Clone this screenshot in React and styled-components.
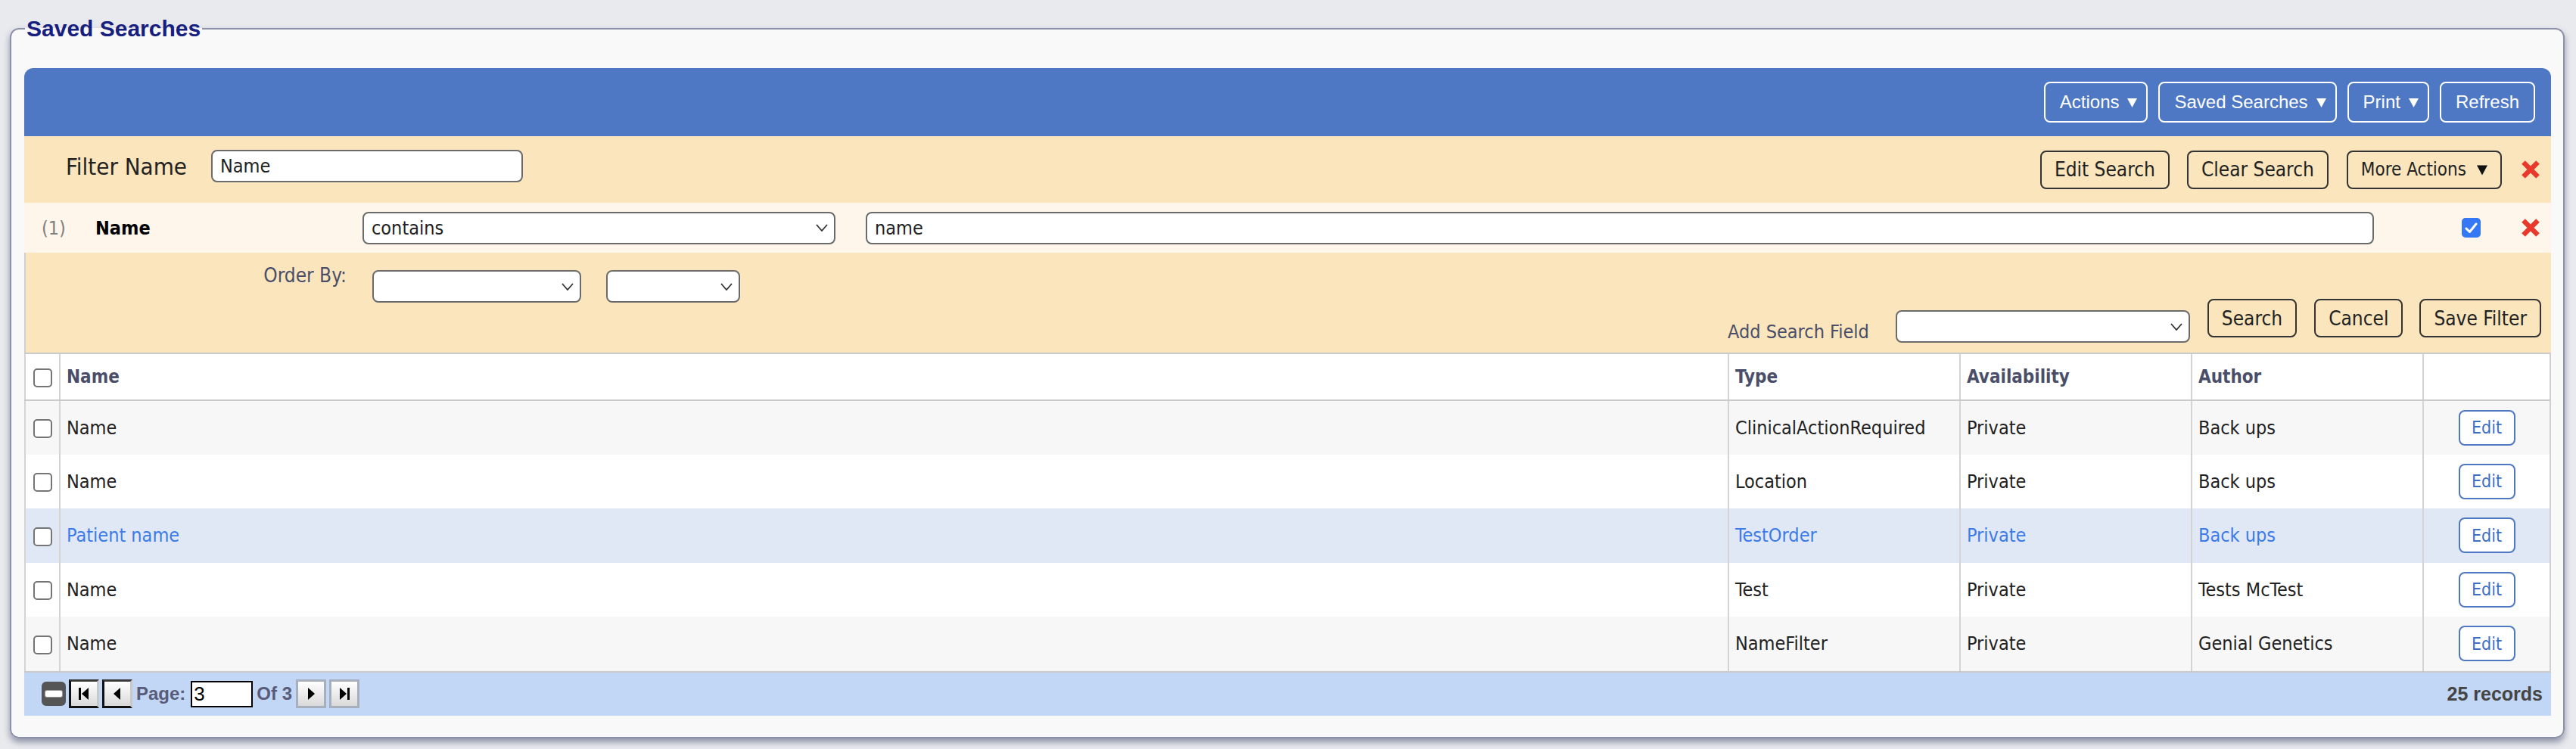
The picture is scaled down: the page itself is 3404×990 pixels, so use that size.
import React from "react";
import styled, { createGlobalStyle, css } from "styled-components";

const GlobalStyle = createGlobalStyle`
  html, body {
    margin: 0;
    background: #e9eaee;
  }
  body {
    font-family: "DejaVu Sans Condensed", "Liberation Sans", Arial, sans-serif;
    color: #222;
  }
`;

const Page = styled.div`
  padding: 23px 15px 17px 13px;
`;

const Frame = styled.fieldset`
  margin: 0;
  min-width: 0;
  padding: 37px 16px 28px 17px;
  border: 2px solid #8d90a9;
  border-radius: 12px;
  background: #f9f9f9;
  box-shadow: 0 5px 8px rgba(70, 74, 110, 0.55);
`;

const Legend = styled.legend`
  margin-left: 1px;
  padding: 0 2px;
  font: bold 30px/30px "Liberation Sans", Arial, sans-serif;
  color: #17207f;
`;

const Panel = styled.div`
  display: flex;
  flex-direction: column;
`;

/* ---- blue toolbar ---- */
const Toolbar = styled.div`
  height: 90px;
  background: #4e78c4;
  border-radius: 12px 12px 0 0;
  display: flex;
  justify-content: flex-end;
  align-items: center;
  gap: 14px;
  padding-right: 21px;
`;

const ToolButton = styled.button`
  height: 54px;
  box-sizing: border-box;
  display: flex;
  align-items: center;
  gap: 11px;
  padding: 0 ${p => (p.$menu ? 12 : 19)}px 0 19px;
  border: 2px solid #fff;
  border-radius: 8px;
  background: transparent;
  color: #fff;
  font: 24px "Liberation Sans", Arial, sans-serif;
`;

/* ---- filter name row ---- */
const FilterNameRow = styled.div`
  height: 88px;
  box-sizing: border-box;
  background: #fae5bc;
  display: flex;
  align-items: center;
  padding: 0 14px 0 55px;
`;

const BigLabel = styled.span`
  font-size: 31px;
  color: #222;
  margin-bottom: 8px;
`;

const TextInput = styled.input`
  box-sizing: border-box;
  height: 43px;
  width: ${p => (p.$w ? `${p.$w}px` : "auto")};
  flex: ${p => (p.$grow ? 1 : "none")};
  margin-left: ${p => p.$ml || 0}px;
  margin-bottom: ${p => p.$mb || 0}px;
  padding: 0 10px;
  border: 2px solid #6b6b6b;
  border-radius: 8px;
  background: #fff;
  font-family: inherit;
  font-size: 25px;
  color: #222;
  outline: none;
`;

const ButtonGroup = styled.div`
  margin-left: auto;
  display: flex;
  align-items: center;
`;

const TanButton = styled.button`
  height: 51px;
  box-sizing: border-box;
  display: flex;
  align-items: center;
  gap: 14px;
  margin-left: ${p => p.$ml || 0}px;
  padding: 0 17px;
  border: 2px solid #333;
  border-radius: 8px;
  background: #fae5bc;
  color: #222;
  font-family: inherit;
  font-size: ${p => (p.$small ? 24 : 26)}px;
`;

const RemoveMark = styled.span`
  display: inline-flex;
  margin-left: ${p => p.$ml || 0}px;
`;

/* ---- criteria row ---- */
const CriteriaRow = styled.div`
  height: 66px;
  box-sizing: border-box;
  background: #fef6ea;
  display: flex;
  align-items: center;
  padding: 0 14px 0 23px;
`;

const Index = styled.span`
  width: 71px;
  font-size: 25px;
  color: #808080;
`;

const FieldName = styled.span`
  width: 353px;
  font-size: 25px;
  font-weight: bold;
  color: #000;
`;

const SelectBox = styled.div`
  box-sizing: border-box;
  width: ${p => p.$w}px;
  height: 43px;
  flex: none;
  margin-left: ${p => p.$ml || 0}px;
  margin-top: ${p => p.$mt || 0}px;
  display: flex;
  align-items: center;
  padding: 0 8px 0 10px;
  border: 2px solid #6b6b6b;
  border-radius: 8px;
  background: #fff;
  font-size: 25px;
  color: #222;
  svg {
    margin-left: auto;
  }
`;

const Check = styled.span`
  box-sizing: border-box;
  width: 25px;
  height: ${p => (p.$checked ? 26 : 25)}px;
  flex: none;
  margin-left: ${p => p.$ml || 0}px;
  display: inline-flex;
  align-items: center;
  justify-content: center;
  border: 2px solid #757575;
  border-radius: 5px;
  background: #fff;
  vertical-align: middle;
  ${p =>
    p.$checked &&
    css`
      border-color: #3478f6;
      background: #3478f6;
    `}
`;

/* ---- order / add field section ---- */
const OrderSection = styled.div`
  background: #fae5bc;
  border-left: 2px solid #d0d0d0;
  padding: 23px 13px 12px 0;
  display: flex;
  flex-direction: column;
`;

const OrderRow = styled.div`
  display: flex;
  align-items: flex-start;
`;

const SoftLabel = styled.span`
  font-size: ${p => p.$size || 26}px;
  line-height: 30px;
  color: #4a4e69;
  margin-top: ${p => p.$mt || 0}px;
  ${p =>
    p.$w &&
    css`
      width: ${p.$w}px;
      text-align: right;
    `}
`;

const ActionRow = styled.div`
  display: flex;
  justify-content: flex-end;
  align-items: flex-start;
  margin-top: -5px;
`;

/* ---- results table ---- */
const Grid = styled.table`
  width: 100%;
  border-collapse: collapse;
  table-layout: fixed;
  background: #fff;
  border-left: 2px solid #d0d0d0;
  border-right: 2px solid #d0d0d0;
`;

const HeadCell = styled.th`
  height: 60px;
  padding: 0 8px;
  font-size: 24px;
  font-weight: bold;
  color: #4a4e69;
  border-top: 2px solid #cbcbcb;
  border-bottom: 2px solid #cbcbcb;
  border-left: 2px solid #d4d4d4;
  text-align: ${p => (p.$center ? "center" : "left")};
`;

const Row = styled.tr`
  height: 71.5px;
  background: ${p => (p.$selected ? "#e1e8f5" : p.$odd ? "#f7f7f7" : "#fff")};
  color: ${p => (p.$selected ? "#3b7be9" : "#222")};
`;

const Cell = styled.td`
  padding: 0 8px;
  font-size: 25px;
  white-space: nowrap;
  border-left: 2px solid #d4d4d4;
  text-align: ${p => (p.$center ? "center" : "left")};
`;

const EditButton = styled.button`
  width: 75px;
  height: 47px;
  box-sizing: border-box;
  border: 2px solid #4e78c4;
  border-radius: 8px;
  background: #fff;
  color: #3d6fc4;
  font-family: inherit;
  font-size: 23px;
`;

/* ---- pager ---- */
const Pager = styled.div`
  height: 59px;
  box-sizing: border-box;
  background: #c2d6f5;
  border-top: 2px solid #cbcbcb;
  display: flex;
  align-items: center;
  padding: 0 11px 0 23px;
  font: bold 24px "Liberation Sans", Arial, sans-serif;
  color: #585c78;
`;

const Toggle = styled.span`
  width: 32px;
  height: 32px;
  border-radius: 6px;
  background: #555;
  display: inline-flex;
  align-items: center;
  justify-content: center;
  &::after {
    content: "";
    width: 22px;
    height: 8px;
    border-radius: 2px;
    background: #fff;
    box-shadow: 0 0 0 1px #999;
  }
`;

const NavButton = styled.span`
  width: 40px;
  height: 38px;
  box-sizing: border-box;
  margin-left: ${p => p.$ml || 4}px;
  display: inline-flex;
  align-items: center;
  justify-content: center;
  border: 3px solid;
  border-color: ${p => (p.$off ? "#a7afbd" : "#3a3a3a #c8c8c8 #111 #111")};
  background: linear-gradient(#ffffff, #d9d9d9);
`;

const PagerText = styled.span`
  margin-left: ${p => p.$ml || 0}px;
`;

const PageInput = styled.input`
  width: 82px;
  height: 35px;
  box-sizing: border-box;
  margin-left: 7px;
  padding: 0 2px;
  border: 2px solid #000;
  background: #fff;
  font: 26px "Liberation Sans", Arial, sans-serif;
  color: #000;
  outline: none;
`;

const Records = styled.span`
  margin-left: auto;
  font-size: 25px;
  color: #444;
`;

/* ---- small drawings ---- */
const Caret = ({ color = "#fff", w = 13, h = 13 }) => (
  <svg width={w} height={h} viewBox="0 0 13 13">
    <polygon points="0,1 13,1 6.5,13" fill={color} />
  </svg>
);

const RedX = () => (
  <svg width="26" height="26" viewBox="0 0 26 26">
    <path d="M3.5 3.5 L22.5 22.5 M22.5 3.5 L3.5 22.5" stroke="#e8392c" strokeWidth="6.5" />
  </svg>
);

const Chevron = () => (
  <svg width="16" height="10" viewBox="0 0 16 10">
    <path d="M1 1 L8 9 L15 1" fill="none" stroke="#333" strokeWidth="1.8" />
  </svg>
);

const Tick = () => (
  <svg width="17" height="15" viewBox="0 0 17 15">
    <path d="M2 8 L6.5 12.5 L15 2" fill="none" stroke="#fff" strokeWidth="3" strokeLinecap="round" strokeLinejoin="round" />
  </svg>
);

const NavIcon = ({ dir, bar }) => (
  <svg width="16" height="18" viewBox="0 0 16 18">
    {dir === "left" ? (
      <>
        {bar && <rect x="1" y="1" width="3" height="16" fill="#000" />}
        <polygon points={bar ? "14,1 14,17 5,9" : "12,1 12,17 3,9"} fill="#000" />
      </>
    ) : (
      <>
        <polygon points={bar ? "2,1 2,17 11,9" : "4,1 4,17 13,9"} fill="#000" />
        {bar && <rect x="12" y="1" width="3" height="16" fill="#000" />}
      </>
    )}
  </svg>
);

const rows = [
  { name: "Name", type: "ClinicalActionRequired", availability: "Private", author: "Back ups" },
  { name: "Name", type: "Location", availability: "Private", author: "Back ups" },
  { name: "Patient name", type: "TestOrder", availability: "Private", author: "Back ups", selected: true },
  { name: "Name", type: "Test", availability: "Private", author: "Tests McTest" },
  { name: "Name", type: "NameFilter", availability: "Private", author: "Genial Genetics" },
];

export default function App() {
  return (
    <Page>
      <GlobalStyle />
      <Frame>
        <Legend>Saved Searches</Legend>
        <Panel>
          <Toolbar>
            <ToolButton $menu>Actions <Caret /></ToolButton>
            <ToolButton $menu>Saved Searches <Caret /></ToolButton>
            <ToolButton $menu>Print <Caret /></ToolButton>
            <ToolButton>Refresh</ToolButton>
          </Toolbar>

          <FilterNameRow>
            <BigLabel>Filter Name</BigLabel>
            <TextInput $w={412} $ml={32} $mb={9} defaultValue="Name" />
            <ButtonGroup>
              <TanButton>Edit Search</TanButton>
              <TanButton $ml={23}>Clear Search</TanButton>
              <TanButton $ml={24} $small>
                More Actions <Caret color="#111" w={14} h={15} />
              </TanButton>
              <RemoveMark $ml={25}><RedX /></RemoveMark>
            </ButtonGroup>
          </FilterNameRow>

          <CriteriaRow>
            <Index>(1)</Index>
            <FieldName>Name</FieldName>
            <SelectBox $w={625}>contains<Chevron /></SelectBox>
            <TextInput $grow $ml={40} defaultValue="name" />
            <Check $checked $ml={116}><Tick /></Check>
            <RemoveMark $ml={53}><RedX /></RemoveMark>
          </CriteriaRow>

          <OrderSection>
            <OrderRow>
              <SoftLabel $w={424} $mt={-8}>Order By:</SoftLabel>
              <SelectBox $w={276} $ml={34}><Chevron /></SelectBox>
              <SelectBox $w={177} $ml={33}><Chevron /></SelectBox>
            </OrderRow>
            <ActionRow>
              <SoftLabel $size={25} $mt={29}>Add Search Field</SoftLabel>
              <SelectBox $w={389} $ml={35} $mt={15}><Chevron /></SelectBox>
              <TanButton $ml={23}>Search</TanButton>
              <TanButton $ml={23}>Cancel</TanButton>
              <TanButton $ml={22}>Save Filter</TanButton>
            </ActionRow>
          </OrderSection>

          <Grid>
            <colgroup>
              <col style={{ width: 46 }} />
              <col />
              <col style={{ width: 306 }} />
              <col style={{ width: 306 }} />
              <col style={{ width: 306 }} />
              <col style={{ width: 168 }} />
            </colgroup>
            <thead>
              <tr>
                <HeadCell $center><Check /></HeadCell>
                <HeadCell>Name</HeadCell>
                <HeadCell>Type</HeadCell>
                <HeadCell>Availability</HeadCell>
                <HeadCell>Author</HeadCell>
                <HeadCell />
              </tr>
            </thead>
            <tbody>
              {rows.map((r, i) => (
                <Row key={i} $odd={i % 2 === 0} $selected={r.selected}>
                  <Cell $center><Check /></Cell>
                  <Cell>{r.name}</Cell>
                  <Cell>{r.type}</Cell>
                  <Cell>{r.availability}</Cell>
                  <Cell>{r.author}</Cell>
                  <Cell $center><EditButton>Edit</EditButton></Cell>
                </Row>
              ))}
            </tbody>
          </Grid>

          <Pager>
            <Toggle />
            <NavButton><NavIcon dir="left" bar /></NavButton>
            <NavButton><NavIcon dir="left" /></NavButton>
            <PagerText $ml={5}>Page:</PagerText>
            <PageInput defaultValue="3" />
            <PagerText $ml={5}>Of 3</PagerText>
            <NavButton $off $ml={5}><NavIcon dir="right" /></NavButton>
            <NavButton $off><NavIcon dir="right" bar /></NavButton>
            <Records>25 records</Records>
          </Pager>
        </Panel>
      </Frame>
    </Page>
  );
}
